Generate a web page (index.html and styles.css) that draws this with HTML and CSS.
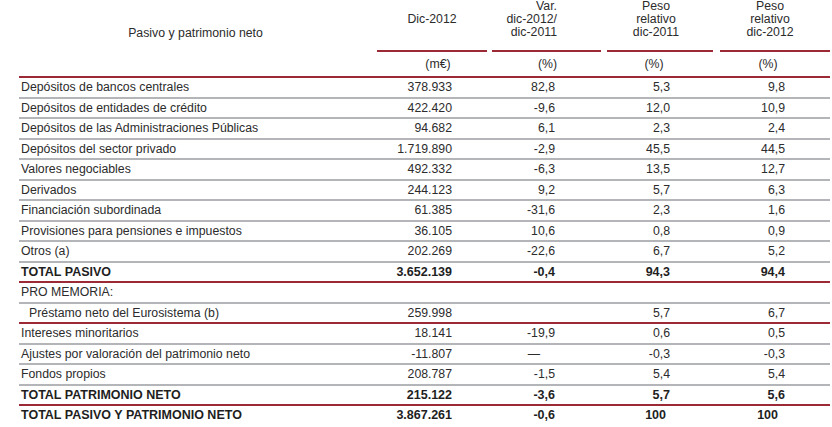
FILE: index.html
```html
<!DOCTYPE html>
<html lang="es">
<head>
<meta charset="utf-8">
<title>Pasivo y patrimonio neto</title>
<link rel="stylesheet" href="styles.css">
</head>
<body>
<div class="page">
<table class="balance">
  <colgroup>
    <col class="c1"><col class="c2"><col class="c3"><col class="c4"><col class="c5">
  </colgroup>
  <thead>
    <tr class="h1">
      <th class="label-h" rowspan="2">Pasivo y patrimonio neto</th>
      <th class="col2"><div class="seg">Dic-2012</div></th>
      <th class="col3"><div class="seg">Var.<br>dic-2012/<br>dic-2011</div></th>
      <th class="col4"><div class="seg">Peso<br>relativo<br>dic-2011</div></th>
      <th class="col5"><div class="seg">Peso<br>relativo<br>dic-2012</div></th>
    </tr>
    <tr class="h2">
      <th class="col2"><div class="unit">(m€)</div></th>
      <th class="col3"><div class="unit">(%)</div></th>
      <th class="col4"><div class="unit">(%)</div></th>
      <th class="col5"><div class="unit">(%)</div></th>
    </tr>
  </thead>
  <tbody>
    <tr><td>Depósitos de bancos centrales</td><td>378.933</td><td>82,8</td><td>5,3</td><td>9,8</td></tr>
    <tr><td>Depósitos de entidades de crédito</td><td>422.420</td><td>-9,6</td><td>12,0</td><td>10,9</td></tr>
    <tr><td>Depósitos de las Administraciones Públicas</td><td>94.682</td><td>6,1</td><td>2,3</td><td>2,4</td></tr>
    <tr><td>Depósitos del sector privado</td><td>1.719.890</td><td>-2,9</td><td>45,5</td><td>44,5</td></tr>
    <tr><td>Valores negociables</td><td>492.332</td><td>-6,3</td><td>13,5</td><td>12,7</td></tr>
    <tr><td>Derivados</td><td>244.123</td><td>9,2</td><td>5,7</td><td>6,3</td></tr>
    <tr><td>Financiación subordinada</td><td>61.385</td><td>-31,6</td><td>2,3</td><td>1,6</td></tr>
    <tr><td>Provisiones para pensiones e impuestos</td><td>36.105</td><td>10,6</td><td>0,8</td><td>0,9</td></tr>
    <tr><td>Otros (a)</td><td>202.269</td><td>-22,6</td><td>6,7</td><td>5,2</td></tr>
    <tr class="total red"><td>TOTAL PASIVO</td><td>3.652.139</td><td>-0,4</td><td>94,3</td><td>94,4</td></tr>
    <tr><td>PRO MEMORIA:</td><td></td><td></td><td></td><td></td></tr>
    <tr class="red"><td class="indent">Préstamo neto del Eurosistema (b)</td><td>259.998</td><td></td><td>5,7</td><td>6,7</td></tr>
    <tr><td>Intereses minoritarios</td><td>18.141</td><td>-19,9</td><td>0,6</td><td>0,5</td></tr>
    <tr><td>Ajustes por valoración del patrimonio neto</td><td>-11.807</td><td class="dash">—</td><td>-0,3</td><td>-0,3</td></tr>
    <tr><td>Fondos propios</td><td>208.787</td><td>-1,5</td><td>5,4</td><td>5,4</td></tr>
    <tr class="total red"><td>TOTAL PATRIMONIO NETO</td><td>215.122</td><td>-3,6</td><td>5,7</td><td>5,6</td></tr>
    <tr class="total last"><td>TOTAL PASIVO Y PATRIMONIO NETO</td><td>3.867.261</td><td>-0,6</td><td class="hundred">100</td><td class="hundred">100</td></tr>
  </tbody>
</table>
</div>
</body>
</html>
```

FILE: styles.css
```css
html, body {
  margin: 0;
  padding: 0;
  background: #ffffff;
}

body {
  font-family: "Liberation Sans", Arial, sans-serif;
  font-size: 12.3px;
  color: #2c2c2c;
}

.page {
  padding: 0 2px 0 19px;
}

.balance {
  width: 811px;
  table-layout: fixed;
  border-collapse: separate;
  border-spacing: 0;
}

.c1 { width: 353px; }
.c2 { width: 115px; }
.c3 { width: 114px; }
.c4 { width: 112px; }
.c5 { width: 117px; }

.balance th {
  font-weight: normal;
  padding: 0;
  line-height: 13px;
}

.balance th.label-h {
  text-align: center;
  vertical-align: middle;
  border-bottom: 2px solid #9c2a36;
  padding-bottom: 9px;
}

.h1 th.col2, .h1 th.col3, .h2 th.col2, .h2 th.col3 { padding-left: 5px; }
.h1 th.col4, .h2 th.col4 { padding-left: 6px; }
.h1 th.col5, .h2 th.col5 { padding-left: 7px; }

.seg {
  height: 39px;
  padding-bottom: 11px;
  border-bottom: 2px solid #9c2a36;
  display: flex;
  flex-direction: column;
  justify-content: center;
  text-align: center;
}

.h1 .col3 .seg { text-align: right; padding-right: 44px; }
.h1 .col4 .seg { padding-right: 8px; }
.h1 .col5 .seg { padding-right: 10px; }

.h2 th {
  height: 24px;
  border-bottom: 2px solid #9c2a36;
  vertical-align: middle;
}

.unit { text-align: center; }
.h2 .col2 .unit { padding-left: 12px; }
.h2 .col3 .unit { text-align: right; padding-right: 44px; }
.h2 .col4 .unit { padding-right: 12px; }
.h2 .col5 .unit { padding-right: 14px; }

.balance td {
  height: 18.5px;
  padding: 0;
  line-height: 14px;
  vertical-align: middle;
  text-align: right;
  border-bottom: 2px solid #b3b5b8;
  white-space: nowrap;
}

.balance td:nth-child(1) { text-align: left; padding-left: 2px; }
.balance td:nth-child(2) { padding-right: 35px; }
.balance td:nth-child(3) { padding-right: 46px; }
.balance td:nth-child(4) { padding-right: 43px; }
.balance td:nth-child(5) { padding-right: 45px; }

.balance td.indent { padding-left: 10px; }
.balance td.dash { padding-right: 61px; }
.balance td.hundred:nth-child(4) { padding-right: 47px; }
.balance td.hundred:nth-child(5) { padding-right: 52px; }

.balance tr.red td { border-bottom-color: #9c2a36; }
.balance tr.total td { font-weight: bold; font-size: 12.5px; color: #1e1e1e; }
.balance tr.last td { border-bottom: none; }
```
